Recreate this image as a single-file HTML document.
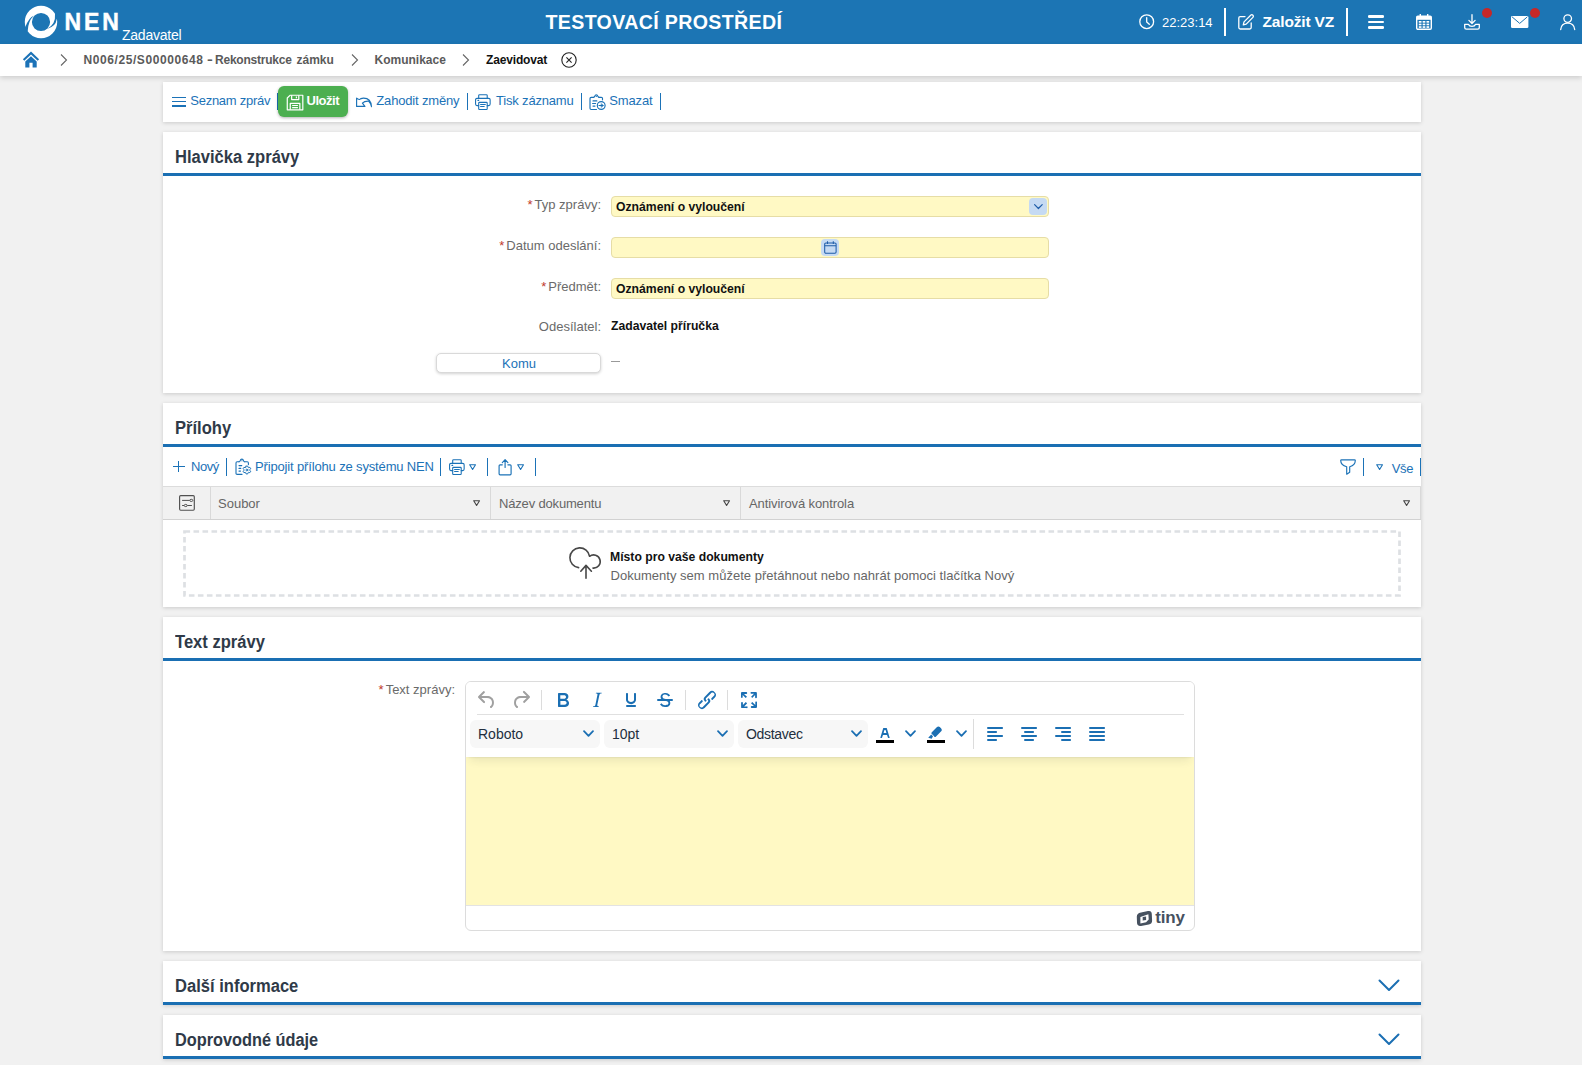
<!DOCTYPE html>
<html lang="cs">
<head>
<meta charset="utf-8">
<title>NEN - Zaevidovat</title>
<style>
*{box-sizing:border-box;margin:0;padding:0}
html,body{width:1582px;height:1065px;overflow:hidden}
body{background:#f1f1f1;font-family:"Liberation Sans",sans-serif;font-size:13px;color:#666;position:relative}
.abs{position:absolute}
.t{position:absolute;white-space:nowrap;line-height:1}
svg{position:absolute;overflow:visible}
/* header */
#hdr{position:absolute;left:0;top:0;width:1582px;height:44px;background:#1c75b4}
#bc{position:absolute;left:0;top:44px;width:1582px;height:32px;background:#fff;box-shadow:0 2px 5px rgba(0,0,0,.15)}
.panel{position:absolute;left:163px;width:1258px;background:#fff;box-shadow:0 1px 4px rgba(0,0,0,.16)}
.ptitle{position:absolute;left:12px;top:14.700px;font-size:18px;font-weight:bold;color:#2f3a48;white-space:nowrap;line-height:20px;transform-origin:0 50%}
.pline{position:absolute;left:0;top:41px;width:100%;height:3px;background:#1a6fb3}
.lnk{color:#1b72b7}
.sep{position:absolute;width:1.5px;background:#1b72b7}
.lbl{position:absolute;text-align:right;white-space:nowrap;line-height:1;color:#6a6a6a;font-size:13px}
.req{color:#c0392b;margin-right:2px}
.fld{position:absolute;left:448px;width:438px;height:21px;background:#fff9c4;border:1px solid #e6dda6;border-radius:4px}
.val{position:absolute;white-space:nowrap;line-height:1;color:#111;font-weight:bold;font-size:13px}
.dd{position:absolute;height:28px;background:#f7f7f7;border-radius:6px}
.dd span{position:absolute;left:8px;top:6px;font-size:14px;line-height:16px;color:#222f3e;white-space:nowrap}
</style>
</head>
<body>

<!-- ================= HEADER ================= -->
<div id="hdr">
  <!-- logo -->
  <svg style="left:24px;top:5px" width="34" height="34" viewBox="0 0 34 34">
    <path d="M17 .8a16.200 16.200 0 1 0 0 32.400 16.200 16.200 0 1 0 0-32.400ZM17 7.900a9.100 9.100 0 1 1 0 18.200 9.100 9.100 0 1 1 0-18.200Z" fill="#fff" fill-rule="evenodd"/>
    <path d="M1.200 22.300Q4.850 12.300 9.900 10.700Q4.200 15.600 3.700 26L1.500 27.500L-.5 24Z" fill="#1c75b4"/>
    <path d="M31 9Q32 19.500 22.900 23.900Q31.700 21.800 32.800 14L34.500 13L33 8Z" fill="#1c75b4"/>
  </svg>
  <div class="t" id="nen" style="left:64.6px;top:11px;font-size:23px;font-weight:bold;color:#fff;letter-spacing:2.9px;-webkit-text-stroke:.45px #fff">NEN</div>
  <div class="t" id="zad" style="left:122px;top:28.3px;font-size:14px;color:#fff;letter-spacing:-.24px">Zadavatel</div>
  <div class="t" id="ttl" style="left:545.5px;top:12.6px;font-size:19.6px;font-weight:bold;color:#fff;letter-spacing:.35px">TESTOVACÍ PROSTŘEDÍ</div>
  <!-- clock -->
  <svg style="left:1139px;top:14px" width="16" height="16" viewBox="0 0 16 16" fill="none" stroke="#fff" stroke-width="1.3" stroke-linecap="round">
    <circle cx="7.7" cy="7.7" r="6.9"/><path d="M7.7 3.6v4.3l2.6 2.4"/>
  </svg>
  <div class="t" id="clk" style="left:1162px;top:16px;font-size:13px;color:#fff">22:23:14</div>
  <div class="abs" style="left:1224px;top:8px;width:2px;height:28px;background:#fff"></div>
  <!-- edit -->
  <svg style="left:1238px;top:14px" width="17" height="16" viewBox="0 0 17 16" fill="none" stroke="#fff" stroke-width="1.3" stroke-linejoin="round" stroke-linecap="round">
    <path d="M7 2.6H2.2a1.4 1.4 0 0 0-1.4 1.4v9.6A1.4 1.4 0 0 0 2.2 15h9.6a1.4 1.4 0 0 0 1.4-1.4V9"/>
    <path d="M12.7 1.2a1.5 1.5 0 0 1 2.2 2.2L8.2 10.1 5.3 10.8 6 7.9z"/>
  </svg>
  <div class="t" id="zvz" style="left:1262.5px;top:14.3px;font-size:15.5px;font-weight:bold;color:#fff;letter-spacing:-.17px">Založit VZ</div>
  <div class="abs" style="left:1346px;top:8px;width:2px;height:28px;background:#fff"></div>
  <!-- hamburger -->
  <div class="abs" style="left:1368px;top:15px;width:16px;height:2.6px;background:#fff;border-radius:1.3px"></div>
  <div class="abs" style="left:1368px;top:20.8px;width:16px;height:2.6px;background:#fff;border-radius:1.3px"></div>
  <div class="abs" style="left:1368px;top:26.2px;width:16px;height:2.6px;background:#fff;border-radius:1.3px"></div>
  <!-- calendar -->
  <svg style="left:1416px;top:14px" width="16" height="16" viewBox="0 0 16 16">
    <rect x=".7" y="2.2" width="14.6" height="13.1" rx="1.2" fill="none" stroke="#fff" stroke-width="1.4"/>
    <rect x=".7" y="2.2" width="14.6" height="3.6" fill="#fff"/>
    <rect x="3.6" y="0" width="1.4" height="3" fill="#fff"/><rect x="11" y="0" width="1.4" height="3" fill="#fff"/>
    <g fill="#fff"><rect x="2.800" y="7" width="2.700" height="1.700"/><rect x="6.650" y="7" width="2.700" height="1.700"/><rect x="10.500" y="7" width="2.700" height="1.700"/>
    <rect x="2.800" y="9.600" width="2.700" height="1.700"/><rect x="6.650" y="9.600" width="2.700" height="1.700"/><rect x="10.500" y="9.600" width="2.700" height="1.700"/>
    <rect x="2.800" y="12.200" width="2.700" height="1.700"/><rect x="6.650" y="12.200" width="2.700" height="1.700"/><rect x="10.500" y="12.200" width="2.700" height="1.700"/></g>
  </svg>
  <!-- download -->
  <svg style="left:1464px;top:14px" width="16" height="16" viewBox="0 0 16 16" fill="none" stroke="#fff" stroke-width="1.3" stroke-linecap="round" stroke-linejoin="round">
    <path d="M8 .7v8.6M4.9 6.4 8 9.5l3.1-3.1"/>
    <path d="M.7 10.3v3.2a1.6 1.6 0 0 0 1.6 1.6h11.4a1.6 1.6 0 0 0 1.6-1.6v-3.2H11.6c-.5 1.3-1.9 2.1-3.6 2.1s-3.1-.8-3.6-2.1z"/>
  </svg>
  <div class="abs" style="left:1482px;top:8px;width:10px;height:10px;border-radius:5px;background:#c62828"></div>
  <!-- mail -->
  <svg style="left:1511px;top:16px" width="18" height="12" viewBox="0 0 18 12">
    <rect x="0" y="0" width="17.4" height="12" rx="1.3" fill="#fff"/>
    <path d="M1 .8 8.7 7.4 16.4.8" fill="none" stroke="#1c75b4" stroke-width="1"/>
  </svg>
  <div class="abs" style="left:1530px;top:8px;width:10px;height:10px;border-radius:5px;background:#c62828"></div>
  <!-- user -->
  <svg style="left:1560px;top:14px" width="16" height="16" viewBox="0 0 16 16" fill="none" stroke="#fff" stroke-width="1.3" stroke-linecap="round">
    <circle cx="7.7" cy="4.6" r="3.8"/><path d="M.7 15.5c.4-4 3.300-6.300 7-6.300s6.600 2.300 7 6.300"/>
  </svg>
</div>

<!-- ================= BREADCRUMB ================= -->
<div id="bc">
  <svg style="left:23px;top:8px" width="16" height="16" viewBox="0 0 16 16">
    <path d="M8-.4-.1 7.300 1.300 8.800 8 2.600 14.700 8.800 16.100 7.300z" fill="#1b72b7"/>
    <path d="M8 4.200 2.300 9.500V15.600H6.400V10.800H9.600V15.600H13.700V9.500z" fill="#1b72b7"/>
  </svg>
  <svg style="left:60px;top:10px" width="8" height="12" viewBox="0 0 8 12" fill="none" stroke="#666" stroke-width="1.1"><path d="M1 .5 6.500 6 1 11.500"/></svg>
  <div class="t" id="bc1a" style="left:83.500px;top:10px;font-size:12px;font-weight:bold;color:#5a5a5a;letter-spacing:.58px">N006/25/S00000648</div>
  <div class="t" id="bc1b" style="left:206.500px;top:10px;font-size:12px;font-weight:bold;color:#5a5a5a;transform:scaleX(1.45);transform-origin:0 0">-</div>
  <div class="t" id="bc1c" style="left:215px;top:10px;font-size:12px;font-weight:bold;color:#5a5a5a;letter-spacing:-.23px">Rekonstrukce</div>
  <div class="t" id="bc1d" style="left:296.500px;top:10px;font-size:12px;font-weight:bold;color:#5a5a5a">zámku</div>
  <svg style="left:351px;top:10px" width="8" height="12" viewBox="0 0 8 12" fill="none" stroke="#666" stroke-width="1.1"><path d="M1 .5 6.500 6 1 11.500"/></svg>
  <div class="t" id="bc2" style="left:374.5px;top:10px;font-size:12px;font-weight:bold;color:#5a5a5a">Komunikace</div>
  <svg style="left:462px;top:10px" width="8" height="12" viewBox="0 0 8 12" fill="none" stroke="#666" stroke-width="1.1"><path d="M1 .5 6.500 6 1 11.500"/></svg>
  <div class="t" id="bc3" style="left:486px;top:10px;font-size:12px;font-weight:bold;color:#111;letter-spacing:-.15px">Zaevidovat</div>
  <svg style="left:561px;top:8px" width="16" height="16" viewBox="0 0 16 16" fill="none" stroke="#222" stroke-width="1.1"><circle cx="8" cy="8" r="7.2"/><path d="M5.400 5.400l5.200 5.200M10.600 5.400l-5.200 5.200"/></svg>
</div>


<!-- ================= TOOLBAR PANEL ================= -->
<div class="panel" style="top:82px;height:39.5px;z-index:0">
  <!-- list icon -->
  <div class="abs" style="left:9px;top:15px;width:14px;height:1.3px;background:#1b72b7"></div>
  <div class="abs" style="left:9px;top:19.2px;width:14px;height:1.3px;background:#1b72b7"></div>
  <div class="abs" style="left:9px;top:23.4px;width:14px;height:1.3px;background:#1b72b7"></div>
  <div class="t lnk" id="tb1" style="left:27.3px;top:12px;font-size:13px;letter-spacing:-.27px">Seznam zpráv</div>
  <div class="sep" style="left:113.5px;top:11px;height:17px"></div>
  <!-- save button -->
  <div class="abs" style="left:115px;top:4px;width:70px;height:31px;background:#4caf50;border-radius:6px;box-shadow:0 1px 3px rgba(0,0,0,.3)"></div>
  <svg style="left:122.900px;top:11.600px" width="18.100" height="17" preserveAspectRatio="none" viewBox="0 0 17 17" fill="none" stroke="#fff" stroke-width="1.150" stroke-linejoin="round">
    <path d="M4 1.200H15.800V15.800H1.200V4z"/><path d="M5.300 1.200V5.600H12V1.200"/><path d="M9.800 2.500v1.800"/><path d="M4 15.800V9.300H13V15.800"/><path d="M5.800 11.500h5.400M5.800 13.600h5.400"/>
  </svg>
  <div class="t" id="tb2" style="left:143.5px;top:12px;font-size:13px;color:#fff;font-weight:bold;letter-spacing:-.46px">Uložit</div>
  <!-- discard -->
  <svg style="left:193px;top:9px" width="17" height="13" viewBox="0 0 17 13" fill="none" stroke="#1b72b7" stroke-width="1.150" stroke-linejoin="round" stroke-linecap="round">
    <path d="M.6 3.200V11.400H8.900L6.400 8.200Q8.500 6 12.600 6.200Q14.500 8 15.500 11.700Q15 3 7.400 3.100Q4.500 3.300 3.500 4.500Q2 4.600.6 3.200Z" transform="translate(0 4)"/>
  </svg>
  <div class="t lnk" id="tb3" style="left:213.3px;top:12px;font-size:13px;letter-spacing:-.17px">Zahodit změny</div>
  <div class="sep" style="left:303.5px;top:11px;height:17px"></div>
  <!-- print -->
  <svg style="left:312px;top:12px" width="16.100" height="16" preserveAspectRatio="none" viewBox="0 0 17 16" fill="none" stroke="#1b72b7" stroke-width="1.150" stroke-linejoin="round" stroke-linecap="round">
    <path d="M3.900 4.300V1.600a.9.900 0 0 1 .9-.9h7.200a.9.900 0 0 1 .9.900v2.700"/><path d="M3.900 11.600H2.100A1.500 1.500 0 0 1 .6 10.100V5.800a1.500 1.500 0 0 1 1.500-1.500h12.400A1.500 1.500 0 0 1 16 5.800v4.300a1.500 1.500 0 0 1-1.500 1.500h-1.600"/><path d="M3.900 9.200a.8.800 0 0 1 .8-.8h7.400a.8.800 0 0 1 .8.800v5.500a.8.800 0 0 1-.8.800H4.700a.8.800 0 0 1-.8-.8z"/><path d="M5.900 10.500h5M5.900 12.500h3.800M3.100 6.400h.8"/>
  </svg>
  <div class="t lnk" id="tb4" style="left:333px;top:12px;font-size:13px;letter-spacing:-.18px">Tisk záznamu</div>
  <div class="sep" style="left:417.5px;top:11px;height:17px"></div>
  <!-- delete -->
  <svg style="left:426px;top:12px" width="17" height="16" viewBox="0 0 17 16" fill="none" stroke="#1b72b7" stroke-width="1.150" stroke-linejoin="round" stroke-linecap="round">
    <path d="M4.600 3.300H2.200A1.200 1.200 0 0 0 1 4.500v9.800a1.200 1.200 0 0 0 1.200 1.200h5.300"/><path d="M10 3.300h2.300a1.200 1.200 0 0 1 1.200 1.200v1.300"/><path d="M4.600 3.300c.7 0 .9-.4 1.100-1C6 1.300 6.500.8 7.300.8S8.600 1.300 8.900 2.300c.2.600.4 1 1.100 1"/><path d="M7.200 2.500h.2M4 6.900h3.800M3.600 9.500h3M4 12.100h2"/>
    <circle cx="12.200" cy="11.500" r="3.900"/><path d="M10 11.500h3.800"/><path d="M12.500 9.900l2 1.600-2 1.600z" fill="#1b72b7" stroke-width=".6"/>
  </svg>
  <div class="t lnk" id="tb5" style="left:446.3px;top:12px;font-size:13px;letter-spacing:-.16px">Smazat</div>
  <div class="sep" style="left:496.5px;top:11px;height:17px"></div>
</div>

<!-- ================= PANEL 1 : HLAVICKA ================= -->
<div class="panel" style="top:132px;height:260.5px">
  <div class="ptitle" id="pt1" style="transform:scaleX(.92)">Hlavička zprávy</div>
  <div class="pline"></div>

  <div class="lbl" id="l1" style="right:820px;top:66px"><span class="req">*</span>Typ zprávy:</div>
  <div class="fld" style="top:64px"></div>
  <div class="val" id="v1" style="left:452.6px;top:67.5px;transform:scaleX(.9375);transform-origin:0 0">Oznámení o vyloučení</div>
  <div class="abs" style="left:866px;top:66px;width:18px;height:17px;background:#c5daf3;border-radius:4px"></div>
  <svg style="left:871px;top:72px" width="9" height="6" viewBox="0 0 9 6" fill="none" stroke="#1f5da8" stroke-width="1.200" stroke-linecap="round" stroke-linejoin="round"><path d="M.6.700 4.400 4.500 8.200.700"/></svg>

  <div class="lbl" id="l2" style="right:820px;top:107px"><span class="req">*</span>Datum odeslání:</div>
  <div class="fld" style="top:105px"></div>
  <div class="abs" style="left:658px;top:107px;width:18px;height:17px;background:#c5daf3;border-radius:4px"></div>
  <svg style="left:661px;top:108.500px" width="13" height="13" viewBox="0 0 13 13" fill="none" stroke="#1f5da8" stroke-width="1.050" stroke-linejoin="round"><rect x=".7" y="1.900" width="11.400" height="10.300" rx="1.200"/><path d="M.7 4.800h11.400M3.500.3v2.600M9.300.3v2.600"/></svg>

  <div class="lbl" id="l3" style="right:820px;top:148px"><span class="req">*</span>Předmět:</div>
  <div class="fld" style="top:146px"></div>
  <div class="val" id="v3" style="left:452.6px;top:149.5px;transform:scaleX(.9375);transform-origin:0 0">Oznámení o vyloučení</div>

  <div class="lbl" id="l4" style="right:820px;top:188px">Odesílatel:</div>
  <div class="val" id="v4" style="left:448.2px;top:187.2px;transform:scaleX(.9375);transform-origin:0 0">Zadavatel příručka</div>

  <div class="abs" style="left:273px;top:221px;width:165px;height:19.500px;background:#fff;border:1px solid #d9d9d9;border-radius:5px;box-shadow:0 1px 3px rgba(0,0,0,.18)"></div>
  <div class="t lnk" id="komu" style="left:339px;top:225px;font-size:13px">Komu</div>
  <div class="abs" style="left:448px;top:229px;width:9px;height:1px;background:#999"></div>
</div>


<!-- ================= PANEL 2 : PRILOHY ================= -->
<div class="panel" style="top:403px;height:204px">
  <div class="ptitle" id="pt2" style="transform:scaleX(.92)">Přílohy</div>
  <div class="pline"></div>
  <!-- toolbar -->
  <div class="abs" style="left:9.600px;top:63px;width:12.300px;height:1.200px;background:#1b72b7"></div>
  <div class="abs" style="left:15px;top:57.800px;width:1.200px;height:11.700px;background:#1b72b7"></div>
  <div class="t lnk" id="pb1" style="left:28px;top:57px;font-size:13px;letter-spacing:-.45px">Nový</div>
  <div class="sep" style="left:62.500px;top:55px;height:18px"></div>
  <svg style="left:72px;top:55px" width="17" height="18" viewBox="0 0 17 18" fill="none" stroke="#1b72b7" stroke-width="1.100" stroke-linejoin="round" stroke-linecap="round">
    <path d="M4 3.800H2.100A1.100 1.100 0 0 0 1 4.900v10.400a1.100 1.100 0 0 0 1.100 1.100H7"/><path d="M9.700 3.800h2.600a1.100 1.100 0 0 1 1.100 1.100v1.700"/><path d="M4 3.800c.7 0 .9-.4 1.100-1C5.400 1.700 6 1.100 6.900 1.100S8.300 1.700 8.600 2.800c.2.600.4 1 1.100 1"/>
    <path d="M6.800 2.700H7M4 7.600h2.800M4 10.400h1.800M4 13.100h1.500"/>
    <path d="M11.07 8.09 12.73 8.09 13.08 9.35 13.60 9.65 14.87 9.32 15.70 10.76 14.78 11.70 14.78 12.30 15.70 13.24 14.87 14.68 13.60 14.35 13.08 14.65 12.73 15.91 11.07 15.91 10.72 14.65 10.20 14.35 8.93 14.68 8.10 13.24 9.02 12.30 9.02 11.70 8.10 10.76 8.93 9.32 10.20 9.65 10.72 9.35Z" stroke-width="1"/><circle cx="11.900" cy="12" r=".9" stroke-width="1"/>
  </svg>
  <div class="t lnk" id="pb2" style="left:92px;top:57px;font-size:13px;letter-spacing:-.15px">Připojit přílohu ze systému NEN</div>
  <div class="sep" style="left:276.500px;top:55px;height:18px"></div>
  <svg style="left:286px;top:55.600px" width="16.100" height="16" preserveAspectRatio="none" viewBox="0 0 17 16" fill="none" stroke="#1b72b7" stroke-width="1.150" stroke-linejoin="round" stroke-linecap="round">
    <path d="M3.900 4.300V1.600a.9.900 0 0 1 .9-.9h7.200a.9.900 0 0 1 .9.900v2.700"/><path d="M3.900 11.600H2.100A1.500 1.500 0 0 1 .6 10.100V5.800a1.500 1.500 0 0 1 1.500-1.500h12.400A1.500 1.500 0 0 1 16 5.800v4.300a1.500 1.500 0 0 1-1.500 1.500h-1.600"/><path d="M3.900 9.200a.8.800 0 0 1 .8-.8h7.400a.8.800 0 0 1 .8.800v5.500a.8.800 0 0 1-.8.800H4.700a.8.800 0 0 1-.8-.8z"/><path d="M5.900 10.500h5M5.900 12.500h3.800M3.100 6.400h.8"/>
  </svg>
  <svg style="left:306px;top:61px" width="8" height="7" viewBox="0 0 8 7" fill="none" stroke="#1b72b7" stroke-width="1.100" stroke-linejoin="round"><path d="M.700.700h5.800L3.600 5.500z"/></svg>
  <div class="sep" style="left:323.500px;top:55px;height:18px"></div>
  <svg style="left:335px;top:54.500px" width="15" height="18" viewBox="0 0 15 18" fill="none" stroke="#1b72b7" stroke-width="1.150" stroke-linejoin="round" stroke-linecap="round">
    <path d="M4.300 6.800H2.100a1 1 0 0 0-1 1V15.800a1 1 0 0 0 1 1H12.100a1 1 0 0 0 1-1V7.800a1 1 0 0 0-1-1H9.900"/><path d="M7.100 9.400V1.800M4.300 4.600 7.100 1.700 9.900 4.600"/>
  </svg>
  <svg style="left:353.500px;top:61px" width="8" height="7" viewBox="0 0 8 7" fill="none" stroke="#1b72b7" stroke-width="1.100" stroke-linejoin="round"><path d="M.700.700h5.800L3.600 5.500z"/></svg>
  <div class="sep" style="left:371.500px;top:55px;height:18px"></div>
  <!-- right side -->
  <svg style="left:1177px;top:56px" width="17" height="16" viewBox="0 0 17 16" fill="none" stroke="#1b72b7" stroke-width="1.150" stroke-linejoin="round"><path d="M.7 1.600C.7 1.100 1 .8 1.500 .8H14.500C15 .8 15.300 1.100 15.300 1.600C15.300 4.800 12.800 6.900 9.700 7.800V13.300L6.700 15.200V7.800C3.600 6.900 .7 4.800 .7 1.600Z"/></svg>
  <div class="sep" style="left:1199.700px;top:55px;height:18px"></div>
  <svg style="left:1213px;top:61px" width="8" height="7" viewBox="0 0 8 7" fill="none" stroke="#1b72b7" stroke-width="1.100" stroke-linejoin="round"><path d="M.700.700h5.800L3.600 5.500z"/></svg>
  <div class="t lnk" id="pb3" style="left:1228.700px;top:58.500px;font-size:13px;letter-spacing:-.3px">Vše</div>
  <div class="sep" style="left:1256.500px;top:55px;height:18px"></div>
  <!-- table header -->
  <div class="abs" style="left:0;top:83px;width:1258px;height:33.500px;background:#f1f1f1;border-top:1px solid #dcdcdc;border-bottom:1px solid #d2d2d2"></div>
  <div class="abs" style="left:47px;top:84px;width:1px;height:31.500px;background:#d9d9d9"></div>
  <div class="abs" style="left:327px;top:84px;width:1px;height:31.500px;background:#d9d9d9"></div>
  <div class="abs" style="left:577px;top:84px;width:1px;height:31.500px;background:#d9d9d9"></div>
  <div class="abs" style="left:1257px;top:84px;width:1px;height:31.500px;background:#d9d9d9"></div>
  <svg style="left:16px;top:92.100px" width="17" height="17" viewBox="0 0 17 17" fill="none" stroke="#505050" stroke-width="1.150"><rect x=".6" y=".6" width="14.700" height="14.600" rx="1.100"/><path d="M3.100 5.400h7.600M3.100 10.500h2M8.300 10.500h4.600" stroke-width="1"/><ellipse cx="12.300" cy="5.400" rx="1.500" ry="1.100" stroke-width="1"/><ellipse cx="6.700" cy="10.500" rx="1.500" ry="1.100" stroke-width="1"/></svg>
  <div class="t" id="th1" style="left:55px;top:93.500px;font-size:13px;color:#666">Soubor</div>
  <svg style="left:310px;top:97px" width="8" height="7" viewBox="0 0 8 7" fill="none" stroke="#444" stroke-width="1.100" stroke-linejoin="round"><path d="M.700.700h5.800L3.600 5.500z"/></svg>
  <div class="t" id="th2" style="left:336px;top:93.500px;font-size:13px;color:#666;letter-spacing:-.17px">Název dokumentu</div>
  <svg style="left:560px;top:97px" width="8" height="7" viewBox="0 0 8 7" fill="none" stroke="#444" stroke-width="1.100" stroke-linejoin="round"><path d="M.700.700h5.800L3.600 5.500z"/></svg>
  <div class="t" id="th3" style="left:586px;top:93.500px;font-size:13px;color:#666;letter-spacing:-.1px">Antivirová kontrola</div>
  <svg style="left:1240px;top:97px" width="8" height="7" viewBox="0 0 8 7" fill="none" stroke="#444" stroke-width="1.100" stroke-linejoin="round"><path d="M.700.700h5.800L3.600 5.500z"/></svg>
  <!-- drop zone -->
  <svg style="left:20px;top:127px" width="1219" height="67" viewBox="0 0 1219 67"><rect x="1.500" y="1.500" width="1215" height="64" fill="none" stroke="#dde0e3" stroke-width="2.700" stroke-dasharray="5.600 3.400"/></svg>
  <svg style="left:405px;top:144px" width="34" height="33" viewBox="0 0 34 33" fill="none" stroke="#484848" stroke-width="1.600" stroke-linecap="round" stroke-linejoin="round">
    <path d="M10.600 20.600A9.900 9.900 0 1 1 21.600 9.300A6.600 6.600 0 1 1 25 21.100"/>
    <path d="M18 31.300V18.600M12.800 24.200 18 18.400l5.400 5.800"/>
  </svg>
  <div class="val" id="dz1" style="left:447.300px;top:146.700px;transform:scaleX(.9375);transform-origin:0 0">Místo pro vaše dokumenty</div>
  <div class="t" id="dz2" style="left:447.500px;top:166px;font-size:13px;color:#666;letter-spacing:.02px">Dokumenty sem můžete přetáhnout nebo nahrát pomoci tlačítka Nový</div>
</div>


<!-- ================= PANEL 3 : TEXT ZPRAVY ================= -->
<div class="panel" style="top:617px;height:334px">
  <div class="ptitle" id="pt3" style="transform:scaleX(.92)">Text zprávy</div>
  <div class="pline"></div>
  <div class="lbl" id="l5" style="right:966px;top:65.600px"><span class="req">*</span>Text zprávy:</div>
  <!-- editor -->
  <div class="abs" id="ed" style="left:302px;top:64.300px;width:730px;height:249.400px;border:1px solid #dcdcdc;border-radius:6px;background:#fff;overflow:hidden">
    <div class="abs" style="left:0;top:75px;width:100%;height:148px;background:#fff9c4"></div>
    <div class="abs" style="left:0;top:0;width:100%;height:75px;background:#fff;box-shadow:0 2px 2px -2px rgba(34,47,62,.15),0 8px 8px -4px rgba(34,47,62,.085)"></div>
    <div class="abs" style="left:0;top:223px;width:100%;height:1px;background:#e3e3e3"></div>
    <div class="abs" style="left:10.500px;top:31.900px;width:707px;height:1px;background:#e0e0e0"></div>
    <div class="abs" style="left:75px;top:8px;width:1px;height:20px;background:#dcdcdc"></div>
    <div class="abs" style="left:219px;top:8px;width:1px;height:20px;background:#dcdcdc"></div>
    <div class="abs" style="left:261px;top:8px;width:1px;height:20px;background:#dcdcdc"></div>
    <div class="abs" style="left:507px;top:37px;width:1px;height:30px;background:#dcdcdc"></div>
    <!-- undo / redo -->
    <svg style="left:8.500px;top:6px" width="24" height="24" viewBox="0 0 24 24"><path d="M6.400 8H12c3.700 0 6.200 2 6.800 5.100.6 2.700-.4 5.600-2.300 6.800a1 1 0 0 1-1-1.800c1.100-.6 1.800-2.700 1.400-4.600-.5-2.100-2.100-3.500-4.900-3.500H6.400l3.300 3.300a1 1 0 1 1-1.400 1.400l-5-5a1 1 0 0 1 0-1.400l5-5a1 1 0 0 1 1.400 1.400L6.400 8Z" fill="#a0a0a0"/></svg>
    <svg style="left:42.500px;top:6px" width="24" height="24" viewBox="0 0 24 24"><path d="M17.600 10H12c-2.800 0-4.400 1.400-4.900 3.500-.4 2 .3 4 1.400 4.600a1 1 0 1 1-1 1.800c-2-1.200-2.900-4.100-2.300-6.800.6-3 3-5.100 6.800-5.100h5.600l-3.300-3.300a1 1 0 1 1 1.400-1.400l5 5a1 1 0 0 1 0 1.400l-5 5a1 1 0 0 1-1.400-1.400l3.300-3.300Z" fill="#a0a0a0"/></svg>
    <!-- B I U S -->
    <svg style="left:84.5px;top:6px" width="24" height="24" viewBox="0 0 24 24"><path d="M7.800 19c-.3 0-.5 0-.6-.2l-.2-.5V5.700c0-.2 0-.4.200-.5l.6-.2h5c1.500 0 2.700.3 3.500 1 .7.600 1.100 1.400 1.100 2.500a3 3 0 0 1-.6 1.900c-.4.600-1 1-1.600 1.200.4.100.9.300 1.300.6s.8.700 1 1.200c.4.400.5 1 .5 1.600 0 1.300-.4 2.300-1.300 3-.8.700-2.100 1-3.800 1H7.800Zm5-8.300c.6 0 1.200-.1 1.600-.5.400-.3.600-.7.600-1.300 0-1.100-.8-1.700-2.300-1.700H9.300v3.500h3.400Zm.5 6c.7 0 1.300-.1 1.700-.4.400-.4.600-.9.600-1.500s-.2-1-.7-1.400c-.4-.3-1-.4-2-.4H9.400v3.800h4Z" fill="#1b6fb3" fill-rule="evenodd"/></svg>
    <svg style="left:118.5px;top:6px" width="24" height="24" viewBox="0 0 24 24"><path d="m16.700 4.700-.1.900h-.3c-.6 0-1 0-1.400.3-.3.300-.4.600-.5 1.100l-2.100 9.800v.6c0 .5.400.8 1.400.8h.2l-.2.800H8l.2-.8h.2c1.100 0 1.800-.5 2-1.500l2-9.800.1-.5c0-.6-.4-.8-1.400-.8h-.3l.2-.9h5.800Z" fill="#1b6fb3" fill-rule="evenodd"/></svg>
    <svg style="left:152.5px;top:6px" width="24" height="24" viewBox="0 0 24 24"><path d="M16 5c.6 0 1 .4 1 1v5.500a4 4 0 0 1-.4 1.800l-1 1.400a5.300 5.300 0 0 1-5.500 1 5 5 0 0 1-1.600-1c-.5-.4-.8-.9-1.100-1.400a4 4 0 0 1-.4-1.800V6c0-.6.400-1 1-1s1 .4 1 1v5.500c0 .3 0 .6.200 1l.6.700a3.300 3.300 0 0 0 2.200.8 3.400 3.400 0 0 0 2.200-.8c.3-.2.400-.5.600-.8l.2-.9V6c0-.6.400-1 1-1ZM8 17h8c.6 0 1 .4 1 1s-.4 1-1 1H8a1 1 0 0 1 0-2Z" fill="#1b6fb3" fill-rule="evenodd"/></svg>
    <svg style="left:186.5px;top:6px" width="24" height="24" viewBox="0 0 24 24"><g fill="#1b6fb3" fill-rule="evenodd"><path d="M15.600 8.500c-.5-.7-1-1.100-1.300-1.300-.6-.4-1.300-.6-2-.6-2.700 0-2.800 1.700-2.800 2.100 0 1.600 1.800 2 3.200 2.300 4.400.9 4.600 2.800 4.600 3.900 0 1.400-.7 4.100-5 4.100A6.200 6.200 0 0 1 7 16.400l1.500-1.100c.4.600 1.600 2 3.700 2 1.600 0 2.500-.4 3-1.200.4-.8.300-2-.8-2.600-.7-.4-1.600-.7-2.900-1-1-.2-3.900-.8-3.900-3.600C7.600 6 10.300 5 12.400 5c2.900 0 4.200 1.600 4.700 2.400l-1.500 1.100Z"/><path d="M5 11h14a1 1 0 0 1 0 2H5a1 1 0 0 1 0-2Z" fill-rule="nonzero"/></g></svg>
    <!-- link -->
    <svg style="left:228.5px;top:6px" width="24" height="24" viewBox="0 0 24 24"><path d="M6.200 12.300a1 1 0 0 1 1.400 1.400l-2 2a2 2 0 1 0 2.600 2.800l4.800-4.800a1 1 0 0 0 0-1.400 1 1 0 1 1 1.400-1.300 2.900 2.900 0 0 1 0 4L9.600 20a3.900 3.900 0 0 1-5.500-5.500l2-2Zm11.600-.6a1 1 0 0 1-1.400-1.400l2-2a2 2 0 1 0-2.600-2.800L11 10.300a1 1 0 0 0 0 1.400A1 1 0 1 1 9.600 13a2.900 2.900 0 0 1 0-4L14.400 4a3.900 3.900 0 0 1 5.500 5.500l-2 2Z" fill="#1b6fb3" fill-rule="nonzero"/></svg>
    <!-- fullscreen -->
    <svg style="left:270.5px;top:6px" width="24" height="24" viewBox="0 0 24 24"><path d="m15.300 10-1.200-1.300 2.900-3h-2.300a.9.900 0 1 1 0-1.700H19c.5 0 .9.400.9.900v4.400a.9.900 0 1 1-1.800 0V7l-2.900 3Zm0 4 3 3v-2.300a.9.900 0 1 1 1.700 0V19c0 .5-.4.900-.9.900h-4.400a.9.900 0 1 1 0-1.800H17l-3-2.900 1.300-1.200ZM10 15.400l-2.900 3h2.300a.9.900 0 1 1 0 1.700H5a.9.900 0 0 1-.9-.9v-4.400a.9.900 0 1 1 1.800 0V17l2.900-3 1.200 1.300ZM8.700 10 5.700 7v2.300a.9.900 0 0 1-1.700 0V5c0-.5.400-.9.900-.9h4.400a.9.900 0 0 1 0 1.800H7l3 2.900-1.300 1.200Z" fill="#1b6fb3" fill-rule="nonzero"/></svg>
    <!-- dropdowns -->
    <div class="dd" style="left:4px;top:38.200px;width:130px"><span id="d1">Roboto</span></div>
    <svg style="left:117px;top:48px" width="11" height="8" viewBox="0 0 11 8" fill="none" stroke="#1b6fb3" stroke-width="1.800" stroke-linecap="round" stroke-linejoin="round"><path d="M1 1.200 5.500 5.800 10 1.200"/></svg>
    <div class="dd" style="left:138px;top:38.200px;width:130px"><span id="d2">10pt</span></div>
    <svg style="left:251px;top:48px" width="11" height="8" viewBox="0 0 11 8" fill="none" stroke="#1b6fb3" stroke-width="1.800" stroke-linecap="round" stroke-linejoin="round"><path d="M1 1.200 5.500 5.800 10 1.200"/></svg>
    <div class="dd" style="left:272px;top:38.200px;width:130px"><span id="d3" style="letter-spacing:-.3px">Odstavec</span></div>
    <svg style="left:385px;top:48px" width="11" height="8" viewBox="0 0 11 8" fill="none" stroke="#1b6fb3" stroke-width="1.800" stroke-linecap="round" stroke-linejoin="round"><path d="M1 1.200 5.500 5.800 10 1.200"/></svg>
    <!-- text color -->
    <svg style="left:406.5px;top:40px" width="24" height="24" viewBox="0 0 24 24"><path d="M3 18h18v3H3z" fill="#000"/><path d="M8.700 16h-.8a.5.500 0 0 1-.500-.600l2.700-9c.1-.300.300-.400.500-.400h2.800c.2 0 .4.100.5.400l2.700 9a.5.500 0 0 1-.5.600h-.8a.5.500 0 0 1-.400-.400l-.7-2.200c0-.300-.300-.400-.5-.400h-3.400c-.2 0-.4.100-.5.400l-.7 2.200c0 .300-.2.400-.4.400Zm2.600-7.600-.600 2a.5.500 0 0 0 .5.600h1.600a.5.500 0 0 0 .500-.600l-.600-2c0-.300-.300-.400-.5-.400h-.4c-.200 0-.400.100-.5.400Z" fill="#1b6fb3" fill-rule="evenodd"/></svg>
    <svg style="left:438.5px;top:48px" width="11" height="8" viewBox="0 0 11 8" fill="none" stroke="#1b6fb3" stroke-width="1.800" stroke-linecap="round" stroke-linejoin="round"><path d="M1 1.200 5.500 5.800 10 1.200"/></svg>
    <!-- highlight -->
    <svg style="left:457.5px;top:40px" width="24" height="24" viewBox="0 0 24 24"><path d="M3 18h18v3H3z" fill="#000"/><path d="m7.700 16.700-3.500-.9 3-3.300 1.800 1.800-1.300 2.400Zm1.900-2.900-2-2a1 1 0 0 1 0-1.300l5.400-5.400c.8-.8 2-.8 2.800 0l1.400 1.400c.8.800.8 2 0 2.800l-5.400 5.400a1 1 0 0 1-1.400 0l-.8-.9Z" fill="#1b6fb3" fill-rule="evenodd"/></svg>
    <svg style="left:489.5px;top:48px" width="11" height="8" viewBox="0 0 11 8" fill="none" stroke="#1b6fb3" stroke-width="1.800" stroke-linecap="round" stroke-linejoin="round"><path d="M1 1.200 5.500 5.800 10 1.200"/></svg>
    <!-- align -->
    <svg style="left:516.5px;top:40px" width="24" height="24" viewBox="0 0 24 24"><path d="M5 5h14c.6 0 1 .4 1 1s-.4 1-1 1H5a1 1 0 1 1 0-2Zm0 4h8c.6 0 1 .4 1 1s-.4 1-1 1H5a1 1 0 1 1 0-2Zm0 8h8c.6 0 1 .4 1 1s-.4 1-1 1H5a1 1 0 0 1 0-2Zm0-4h14c.6 0 1 .4 1 1s-.4 1-1 1H5a1 1 0 0 1 0-2Z" fill="#1b6fb3" fill-rule="evenodd"/></svg>
    <svg style="left:550.5px;top:40px" width="24" height="24" viewBox="0 0 24 24"><path d="M5 5h14c.6 0 1 .4 1 1s-.4 1-1 1H5a1 1 0 1 1 0-2Zm3 4h8c.6 0 1 .4 1 1s-.4 1-1 1H8a1 1 0 1 1 0-2Zm0 8h8c.6 0 1 .4 1 1s-.4 1-1 1H8a1 1 0 0 1 0-2Zm-3-4h14c.6 0 1 .4 1 1s-.4 1-1 1H5a1 1 0 0 1 0-2Z" fill="#1b6fb3" fill-rule="evenodd"/></svg>
    <svg style="left:584.5px;top:40px" width="24" height="24" viewBox="0 0 24 24"><path d="M5 5h14c.6 0 1 .4 1 1s-.4 1-1 1H5a1 1 0 1 1 0-2Zm6 4h8c.6 0 1 .4 1 1s-.4 1-1 1h-8a1 1 0 0 1 0-2Zm0 8h8c.6 0 1 .4 1 1s-.4 1-1 1h-8a1 1 0 0 1 0-2Zm-6-4h14c.6 0 1 .4 1 1s-.4 1-1 1H5a1 1 0 0 1 0-2Z" fill="#1b6fb3" fill-rule="evenodd"/></svg>
    <svg style="left:618.5px;top:40px" width="24" height="24" viewBox="0 0 24 24"><path d="M5 5h14c.6 0 1 .4 1 1s-.4 1-1 1H5a1 1 0 1 1 0-2Zm0 4h14c.6 0 1 .4 1 1s-.4 1-1 1H5a1 1 0 1 1 0-2Zm0 4h14c.6 0 1 .4 1 1s-.4 1-1 1H5a1 1 0 0 1 0-2Zm0 4h14c.6 0 1 .4 1 1s-.4 1-1 1H5a1 1 0 0 1 0-2Z" fill="#1b6fb3" fill-rule="evenodd"/></svg>
    <!-- tiny logo -->
    <svg style="left:669.500px;top:228.200px" width="17" height="17" viewBox="0 0 17 17"><path d="M5 2.600 12 1.100Q15.600.4 15.800 4L16.100 10.500Q16.200 14 12.800 14.600L5 15.900Q1.200 16.400 1 12.800L.8 6.800Q.7 3.400 5 2.600Z" fill="#46515f"/><path d="M4.400 7.100 12.400 4.300 12.700 9.400 10.100 12.200 4.400 13.400Z" fill="#fff"/><path d="M6.700 7 10.100 6.500V10L6.700 10.400Z" fill="#46515f"/></svg>
    <div class="t" id="tiny" style="left:689.200px;top:227px;font-size:17px;font-weight:bold;color:#46515f;letter-spacing:-.15px">tiny</div>
  </div>
</div>

<!-- ================= PANEL 4 / 5 ================= -->
<div class="panel" style="top:961px;height:44px">
  <div class="ptitle" id="pt4" style="transform:scaleX(.92)">Další informace</div>
  <div class="pline"></div>
  <svg style="left:1215px;top:18px" width="22" height="13" viewBox="0 0 22 13" fill="none" stroke="#1b6fb3" stroke-width="2" stroke-linecap="round" stroke-linejoin="round"><path d="M1.500 1.500 11 11 20.500 1.500"/></svg>
</div>
<div class="panel" style="top:1015px;height:44px">
  <div class="ptitle" id="pt5" style="transform:scaleX(.906)">Doprovodné údaje</div>
  <div class="pline"></div>
  <svg style="left:1215px;top:18px" width="22" height="13" viewBox="0 0 22 13" fill="none" stroke="#1b6fb3" stroke-width="2" stroke-linecap="round" stroke-linejoin="round"><path d="M1.500 1.500 11 11 20.500 1.500"/></svg>
</div>

<!-- SECTIONS -->

</body>
</html>
